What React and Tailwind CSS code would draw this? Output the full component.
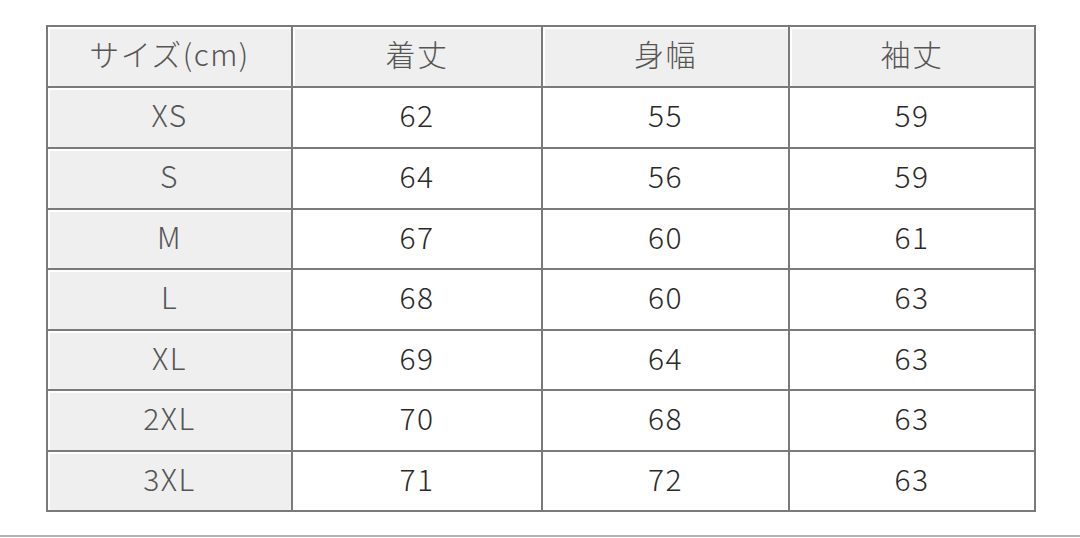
import React from "react";

const headers = ["サイズ(cm)", "着丈", "身幅", "袖丈"];
const rows = [
  ["XS", "62", "55", "59"],
  ["S", "64", "56", "59"],
  ["M", "67", "60", "61"],
  ["L", "68", "60", "63"],
  ["XL", "69", "64", "63"],
  ["2XL", "70", "68", "63"],
  ["3XL", "71", "72", "63"],
];

const base =
  "border-l-2 border-t-2 border-[#7a7a7a] flex items-center justify-center text-[30px] leading-none font-light tracking-[1.5px] pb-[7px]";
const gray = base + " bg-[#efefef] shadow-[inset_2px_2px_0_#ffffff] text-[#555555]";
const white = base + " bg-white text-[#2a2a2a]";

export default function App() {
  return (
    <div
      className="w-[1080px] h-[538px] bg-white overflow-hidden flex flex-col"
      style={{ fontFamily: '"Noto Sans CJK JP", "Noto Sans", sans-serif' }}
    >
      <div className="pt-[25px] pl-[46px]">
        <div className="grid grid-cols-[245px_250px_247px_246px] grid-rows-[61px_61px_61px_60px_61px_60px_61px_60px] w-[990px] border-r-2 border-b-2 border-[#7a7a7a]">
          {headers.map((h, i) => (
            <div key={"h" + i} className={gray}>
              {h}
            </div>
          ))}
          {rows.map((r, ri) =>
            r.map((c, ci) => (
              <div key={ri + "-" + ci} className={ci === 0 ? gray : white}>
                {c}
              </div>
            ))
          )}
        </div>
      </div>
      <div className="mt-[23px] h-[2px] w-full bg-[#b3b3b3]" />
    </div>
  );
}
